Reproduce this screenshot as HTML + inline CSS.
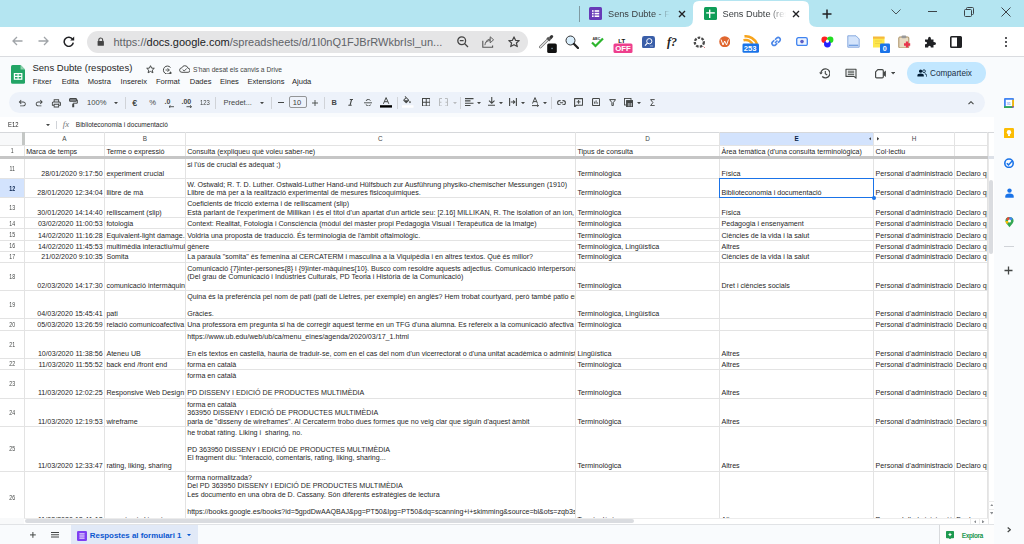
<!DOCTYPE html><html><head><meta charset="utf-8"><style>
*{margin:0;padding:0;box-sizing:border-box}
html,body{width:1024px;height:544px;overflow:hidden}
body{position:relative;font-family:"Liberation Sans", sans-serif;background:#f9fbfd}
.a{position:absolute}
.t{position:absolute;white-space:pre;line-height:1}
</style></head><body>
<div class="a" style="left:0.00px;top:0.00px;width:1024.00px;height:27.00px;background:#b4e5f1;"></div>
<div class="a" style="left:579.00px;top:6.00px;width:1.00px;height:16.00px;background:#7f9aa2;"></div>
<svg class="a" style="left:589.00px;top:7.00px;" width="13" height="13" viewBox="0 0 13 13"><rect x="0" y="0" width="13" height="13" rx="1.5" fill="#673ab7"/><rect x="3" y="3.2" width="1.6" height="1.6" fill="#fff"/><rect x="5.6" y="3.2" width="4.6" height="1.6" fill="#fff"/><rect x="3" y="5.8" width="1.6" height="1.6" fill="#fff"/><rect x="5.6" y="5.8" width="4.6" height="1.6" fill="#fff"/><rect x="3" y="8.4" width="1.6" height="1.6" fill="#fff"/><rect x="5.6" y="8.4" width="4.6" height="1.6" fill="#fff"/></svg>
<div class="a" style="left:608px;top:7px;width:62px;height:14px;overflow:hidden;-webkit-mask-image:linear-gradient(90deg,#000 75%,transparent 100%)"><div class="t" style="left:0;top:3px;font-size:9.2px;color:#3c4043">Sens Dubte - Formulari</div></div>
<svg class="a" style="left:677.50px;top:9.50px;" width="8" height="8" viewBox="0 0 8 8"><path d="M1 1L7 7M7 1L1 7" stroke="#202124" stroke-width="1.4"/></svg>
<svg class="a" style="left:685.00px;top:0.00px;" width="132" height="27" viewBox="0 0 132 27"><path d="M0 27 Q8 27 8 19 L8 7 Q8 1 14 1 L118 1 Q124 1 124 7 L124 19 Q124 27 132 27 Z" fill="#fff"/></svg>
<svg class="a" style="left:703.50px;top:7.00px;" width="13" height="13" viewBox="0 0 13 13"><rect x="0" y="0" width="13" height="13" rx="1.5" fill="#0f9d58"/><rect x="2.2" y="5.2" width="8.6" height="1.4" fill="#fff"/><rect x="5" y="2.6" width="1.4" height="8.4" fill="#fff"/></svg>
<div class="a" style="left:722.5px;top:7px;width:63px;height:14px;overflow:hidden;-webkit-mask-image:linear-gradient(90deg,#000 72%,transparent 100%)"><div class="t" style="left:0;top:3px;font-size:9.2px;color:#3c4043">Sens Dubte (respostes)</div></div>
<svg class="a" style="left:792.00px;top:9.50px;" width="8" height="8" viewBox="0 0 8 8"><path d="M1 1L7 7M7 1L1 7" stroke="#202124" stroke-width="1.4"/></svg>
<svg class="a" style="left:821.50px;top:9.00px;" width="10" height="10" viewBox="0 0 10 10"><path d="M5 0.5V9.5M0.5 5H9.5" stroke="#202124" stroke-width="1.5"/></svg>
<svg class="a" style="left:890.50px;top:8.50px;" width="10" height="6" viewBox="0 0 10 6"><path d="M0.5 0.5L5 5L9.5 0.5" stroke="#4a5559" stroke-width="1" fill="none"/></svg>
<div class="a" style="left:927.50px;top:11.00px;width:9.00px;height:1.00px;background:#3c4448;"></div>
<svg class="a" style="left:963.50px;top:7.00px;" width="10" height="10" viewBox="0 0 10 10"><rect x="0.5" y="2.5" width="7" height="7" rx="1" stroke="#3c4448" fill="none" stroke-width="1"/><path d="M2.5 2.5V1.5Q2.5 0.5 3.5 0.5H8.5Q9.5 0.5 9.5 1.5V6.5Q9.5 7.5 8.5 7.5H7.5" stroke="#3c4448" fill="none" stroke-width="1"/></svg>
<svg class="a" style="left:1000.50px;top:7.00px;" width="10" height="10" viewBox="0 0 10 10"><path d="M0.5 0.5L9.5 9.5M9.5 0.5L0.5 9.5" stroke="#3c4448" stroke-width="1"/></svg>
<div class="a" style="left:0.00px;top:27.00px;width:1024.00px;height:29.00px;background:#fff;"></div>
<div class="a" style="left:0.00px;top:55.50px;width:1024.00px;height:1.00px;background:#dadce0;"></div>
<svg class="a" style="left:12.00px;top:36.00px;" width="11" height="10" viewBox="0 0 11 10"><path d="M10.5 5H1.2M5 1L1 5L5 9" stroke="#a0a4a8" stroke-width="1.3" fill="none"/></svg>
<svg class="a" style="left:37.50px;top:36.00px;" width="11" height="10" viewBox="0 0 11 10"><path d="M0.5 5H9.8M6 1L10 5L6 9" stroke="#a0a4a8" stroke-width="1.3" fill="none"/></svg>
<svg class="a" style="left:63.00px;top:35.50px;" width="12" height="11" viewBox="0 0 12 11"><path d="M9.6 3.2A4.6 4.6 0 1 0 10.3 6.6" stroke="#202124" stroke-width="1.5" fill="none"/><path d="M11.2 0.6V4.6H7.2Z" fill="#202124"/></svg>
<div class="a" style="left:86.50px;top:30.50px;width:441.50px;height:22.30px;background:#e5e5e6;border-radius:11.2px"></div>
<svg class="a" style="left:97.20px;top:37.00px;" width="7.5" height="9" viewBox="0 0 7.5 9"><path d="M1.8 4V2.9A1.95 1.95 0 0 1 5.7 2.9V4" stroke="#444" stroke-width="1.1" fill="none"/><rect x="0.6" y="4" width="6.3" height="4.8" rx="0.6" fill="#444"/></svg>
<div class="t" style="left:113.5px;top:36.9px;font-size:11px;line-height:1;color:#5f6368">https://<span style="color:#202124">docs.google.com</span>/spreadsheets/d/1I0nQ1FJBrRWkbrIsl_un...</div>
<svg class="a" style="left:456.50px;top:35.80px;" width="12" height="12" viewBox="0 0 12 12"><circle cx="4.7" cy="4.7" r="3.9" stroke="#444" stroke-width="1.3" fill="none"/><path d="M2.8 4.7H6.6M7.5 7.5L11 11" stroke="#444" stroke-width="1.3"/></svg>
<svg class="a" style="left:482.00px;top:35.60px;" width="12.5" height="12" viewBox="0 0 12.5 12"><path d="M0.8 4.8V11.2H10.6V9.6" stroke="#555" stroke-width="1.1" fill="none"/><path d="M2.9 9.2Q3 6.8 4.6 5.6Q6 4.6 8.2 4.6M3.6 6.6Q5 3.2 8.2 3" stroke="#555" stroke-width="0.9" fill="none"/><path d="M8.2 0.8L11.6 3.8L8.2 6.8Z" stroke="#555" stroke-width="0.9" fill="none" stroke-linejoin="round"/></svg>
<svg class="a" style="left:507.50px;top:35.80px;" width="12" height="12" viewBox="0 0 12 12"><path d="M6 0.9L7.55 4.3L11.2 4.6L8.4 7L9.3 10.6L6 8.7L2.7 10.6L3.6 7L0.8 4.6L4.45 4.3Z" stroke="#444" stroke-width="1.2" fill="none" stroke-linejoin="round"/></svg>
<svg class="a" style="left:539.00px;top:34.50px;" width="18" height="18" viewBox="0 0 18 18"><path d="M1.4 12L8.6 4.8" stroke="#6a6a6a" stroke-width="2.6" stroke-linecap="round"/><path d="M1.4 12L8.6 4.8" stroke="#ececec" stroke-width="1.2" stroke-linecap="round"/><path d="M7.4 3.6L9.2 1.8L12 4.6L10.2 6.4Z" fill="#555"/><path d="M10 2.2L11.6 0.6Q12.8 -0.4 13.8 0.6Q14.8 1.6 13.6 2.8L12 4.4Z" fill="#333"/><rect x="8.2" y="8.4" width="9.6" height="9.6" rx="1.6" fill="#111"/><rect x="12.4" y="12.8" width="1.3" height="1.3" fill="#8ab"/></svg>
<svg class="a" style="left:564.50px;top:34.80px;" width="14" height="14" viewBox="0 0 14 14"><circle cx="5.5" cy="5.5" r="4.5" stroke="#333" stroke-width="1" fill="#d9eefc"/><path d="M8.8 8.8L13 13" stroke="#222" stroke-width="2.2" stroke-linecap="round"/></svg>
<svg class="a" style="left:590.50px;top:36.00px;" width="13" height="12" viewBox="0 0 13 12"><text x="1.5" y="4" font-size="3.6" font-weight="700" fill="#333" font-family="Liberation Sans">ABC</text><path d="M1 6.5L4.5 10L12 2.5" stroke="#2db52d" stroke-width="2.2" fill="none"/></svg>
<svg class="a" style="left:612.50px;top:36.50px;" width="20" height="16.5" viewBox="0 0 20 16.5"><text x="5.2" y="5.6" font-size="6" font-weight="700" fill="#111" font-family="Liberation Sans">LT</text><rect x="0.5" y="6.5" width="19" height="9.5" rx="1.5" fill="#ee3f8d"/><text x="2.2" y="14.3" font-size="7.8" font-weight="700" fill="#fff" font-family="Liberation Sans">OFF</text></svg>
<svg class="a" style="left:641.50px;top:35.50px;" width="13" height="12.5" viewBox="0 0 13 12.5"><rect x="0" y="0" width="13" height="12.5" rx="2.4" fill="#3a5ea8"/><circle cx="7.3" cy="5.2" r="2.6" stroke="#fff" stroke-width="1" fill="none"/><path d="M5.4 7.2L3 9.6" stroke="#fff" stroke-width="1.2"/><path d="M8 10H11" stroke="#c8d4ee" stroke-width="0.6"/></svg>
<div class="t" style="left:667px;top:36.4px;font-size:12px;font-family:'Liberation Serif',serif;font-style:italic;font-weight:700;color:#222">f?</div>
<svg class="a" style="left:692.50px;top:35.50px;" width="13" height="12.5" viewBox="0 0 13 12.5"><circle cx="6.3" cy="6.2" r="4.5" stroke="#4a4a4a" stroke-width="2.3" fill="none" stroke-dasharray="2.6 1.2"/><path d="M10.5 10.5L12 12" stroke="#c44" stroke-width="0.7"/></svg>
<svg class="a" style="left:718.50px;top:35.80px;" width="11.5" height="11.5" viewBox="0 0 11.5 11.5"><circle cx="5.75" cy="5.75" r="5.5" fill="#e0662e"/><path d="M2 3.5L4 9L5.7 5L7.5 9L9.5 3.5" stroke="#fff" stroke-width="1" fill="none"/></svg>
<svg class="a" style="left:741.50px;top:34.50px;" width="17.5" height="18" viewBox="0 0 17.5 18"><path d="M1.5 5.2A8.5 8.5 0 0 1 10.5 9" stroke="#f7a41d" stroke-width="2.6" fill="none"/><path d="M2.5 1.4A12 12 0 0 1 15 9" stroke="#f7a41d" stroke-width="2.6" fill="none"/><rect x="0.5" y="8.5" width="16.5" height="9.3" rx="1.4" fill="#1a73e8"/><text x="1.8" y="16.3" font-size="7.6" font-weight="700" fill="#fff" font-family="Liberation Sans">253</text></svg>
<svg class="a" style="left:769.00px;top:35.00px;" width="14" height="13" viewBox="0 0 14 13"><path d="M6 8L8.5 5.5" stroke="#4a86e8" stroke-width="1.6"/><path d="M5.3 5.2L3.6 6.9A2.1 2.1 0 0 0 6.6 9.9L8.3 8.2" stroke="#4a86e8" stroke-width="1.6" fill="none"/><path d="M6 4.8L7.7 3.1A2.1 2.1 0 0 1 10.7 6.1L9 7.8" stroke="#4a86e8" stroke-width="1.6" fill="none"/></svg>
<svg class="a" style="left:795.50px;top:36.80px;" width="12" height="9.2" viewBox="0 0 12 9.2"><rect x="0.7" y="0.7" width="10.6" height="7.8" rx="1.6" stroke="#3f83f0" stroke-width="1.3" fill="#eef4fe"/><circle cx="6" cy="4.6" r="1.8" fill="#5b5fc7"/></svg>
<svg class="a" style="left:821.00px;top:35.50px;" width="13" height="12" viewBox="0 0 13 12"><circle cx="3.6" cy="3.8" r="3.2" fill="#f22"/><circle cx="9.2" cy="3.8" r="3.2" fill="#2d2" /><circle cx="6.4" cy="8" r="3.4" fill="#22f"/><circle cx="6.4" cy="5.2" r="1.6" fill="#fff"/></svg>
<svg class="a" style="left:846.50px;top:35.00px;" width="13" height="13" viewBox="0 0 13 13"><path d="M0.8 0.8H9L12.2 4V12.2H0.8Z" fill="#d4e4fb" stroke="#7ea3db" stroke-width="0.9"/><path d="M1.8 10.3H11.2" stroke="#6f9ee0" stroke-width="1.3"/></svg>
<svg class="a" style="left:872.50px;top:35.50px;" width="18" height="17.5" viewBox="0 0 18 17.5"><rect x="0" y="1" width="11.5" height="10.5" fill="#fde74c"/><rect x="0" y="0.5" width="11.5" height="2.2" fill="#f6b93b"/><path d="M2 5H9M2 7.5H8" stroke="#e8c840" stroke-width="0.7"/><rect x="7" y="7.6" width="10" height="9.5" rx="1.3" fill="#1a73e8"/><text x="9.8" y="15.3" font-size="7.2" font-weight="700" fill="#fff" font-family="Liberation Sans">0</text></svg>
<svg class="a" style="left:897.50px;top:34.80px;" width="13.5" height="13.5" viewBox="0 0 13.5 13.5"><rect x="0.8" y="2" width="10" height="11" rx="1" fill="#e9dcc4" stroke="#a98e5f" stroke-width="1"/><rect x="3.5" y="0.5" width="4.8" height="2.8" rx="1" fill="#999"/><path d="M9 6.5V12.5M6 9.5H12.2" stroke="#e8344c" stroke-width="2.3"/></svg>
<svg class="a" style="left:923.50px;top:35.50px;" width="12.5" height="12" viewBox="0 0 12.5 12"><path d="M1 3.5H4Q3.8 0.8 5.5 0.8Q7.2 0.8 7 3.5H9.5V6Q12 5.8 12 7.5Q12 9.2 9.5 9V11.5H6.8Q7 9.8 5.5 9.8Q4 9.8 4.2 11.5H1V8.3Q3 8.5 3 7Q3 5.5 1 5.7Z" fill="#202124"/></svg>
<svg class="a" style="left:949.50px;top:35.50px;" width="12" height="12" viewBox="0 0 12 12"><rect x="0.8" y="0.8" width="10.4" height="10.4" rx="0.8" stroke="#202124" stroke-width="1.6" fill="none"/><rect x="7" y="0.8" width="4.2" height="10.4" fill="#202124"/></svg>
<div class="a" style="left:1005.3px;top:36.90px;width:2px;height:2px;border-radius:1px;background:#202124"></div>
<div class="a" style="left:1005.3px;top:40.70px;width:2px;height:2px;border-radius:1px;background:#202124"></div>
<div class="a" style="left:1005.3px;top:44.50px;width:2px;height:2px;border-radius:1px;background:#202124"></div>
<svg class="a" style="left:11.00px;top:65.20px;" width="14.2" height="18.8" viewBox="0 0 14.2 18.8"><path d="M1.6 0H9.6L14.2 4.6V17.2Q14.2 18.8 12.6 18.8H1.6Q0 18.8 0 17.2V1.6Q0 0 1.6 0Z" fill="#23a566"/><path d="M9.6 0V4.6H14.2Z" fill="#8ed1ad"/><rect x="3.4" y="8.6" width="7.4" height="5.6" fill="none" stroke="#fff" stroke-width="1.2"/><path d="M3.4 11.4H10.8M7.1 8.6V14.2" stroke="#fff" stroke-width="1.1"/></svg>
<div class="t" style="left:32.50px;top:63.00px;font-size:9.5px;color:#1f1f1f;font-weight:400;">Sens Dubte (respostes)</div>
<svg class="a" style="left:145.80px;top:65.00px;" width="9" height="8.5" viewBox="0 0 9 8.5"><path d="M4.5 0.7L5.6 3.1L8.3 3.3L6.3 5.1L6.9 7.8L4.5 6.4L2.1 7.8L2.7 5.1L0.7 3.3L3.4 3.1Z" stroke="#444746" stroke-width="1" fill="none" stroke-linejoin="round"/></svg>
<svg class="a" style="left:161.50px;top:64.50px;" width="11" height="9.5" viewBox="0 0 11 9.5"><path d="M8.5 2.5A4 4 0 1 0 8.8 7.2" stroke="#444746" stroke-width="1" fill="none"/><path d="M3.5 5H7.3M5.5 3.2L7.3 5L5.5 6.8" stroke="#444746" stroke-width="0.9" fill="none"/><path d="M8.5 6.6V9.4M7.1 8H9.9" stroke="#444746" stroke-width="0.9"/></svg>
<svg class="a" style="left:178.50px;top:65.00px;" width="11.5" height="8" viewBox="0 0 11.5 8"><path d="M3 7.3H9Q11 7.3 11 5.2Q11 3.3 9 3.2Q8.4 0.7 5.8 0.7Q3.6 0.7 2.9 2.8Q0.6 3 0.6 5.1Q0.6 7.3 3 7.3Z" stroke="#444746" stroke-width="0.95" fill="none"/><path d="M3.7 4.6L5.2 6L7.8 3.4" stroke="#444746" stroke-width="0.9" fill="none"/></svg>
<div class="t" style="left:193.00px;top:67.00px;font-size:6.66px;color:#444746;font-weight:400;">S&#x27;han desat els canvis a Drive</div>
<div class="t" style="left:32.80px;top:78.00px;font-size:7.55px;color:#1f1f1f;font-weight:400;">Fitxer</div>
<div class="t" style="left:61.70px;top:78.00px;font-size:7.55px;color:#1f1f1f;font-weight:400;">Edita</div>
<div class="t" style="left:87.80px;top:78.00px;font-size:7.55px;color:#1f1f1f;font-weight:400;">Mostra</div>
<div class="t" style="left:120.60px;top:78.00px;font-size:7.55px;color:#1f1f1f;font-weight:400;">Insereix</div>
<div class="t" style="left:156.00px;top:78.00px;font-size:7.55px;color:#1f1f1f;font-weight:400;">Format</div>
<div class="t" style="left:189.70px;top:78.00px;font-size:7.55px;color:#1f1f1f;font-weight:400;">Dades</div>
<div class="t" style="left:220.00px;top:78.00px;font-size:7.55px;color:#1f1f1f;font-weight:400;">Eines</div>
<div class="t" style="left:247.50px;top:78.00px;font-size:7.55px;color:#1f1f1f;font-weight:400;">Extensions</div>
<div class="t" style="left:292.00px;top:78.00px;font-size:7.55px;color:#1f1f1f;font-weight:400;">Ajuda</div>
<svg class="a" style="left:818.80px;top:68.20px;" width="11.5" height="10.5" viewBox="0 0 11.5 10.5"><path d="M1.9 5.3A4.5 4.5 0 1 1 3.2 8.5" stroke="#444746" stroke-width="1.25" fill="none"/><path d="M0 4.4L1.9 6.6L3.8 4.4Z" fill="#444746"/><path d="M6.3 2.9V5.6L8.2 7" stroke="#444746" stroke-width="1.1" fill="none"/></svg>
<svg class="a" style="left:844.50px;top:68.30px;" width="12" height="11" viewBox="0 0 12 11"><path d="M1 1.2H11V10.2L9 8.4H1Z" stroke="#444746" stroke-width="1.1" fill="none" stroke-linejoin="round"/><path d="M2.8 3.2H9.2M2.8 4.8H9.2M2.8 6.4H9.2" stroke="#444746" stroke-width="0.9"/></svg>
<svg class="a" style="left:874.50px;top:69.00px;" width="11.5" height="9.5" viewBox="0 0 11.5 9.5"><path d="M2.8 0.6H7.2Q8.3 0.6 8.3 1.7V7.8Q8.3 8.9 7.2 8.9H1.7Q0.6 8.9 0.6 7.8V2.8Z" stroke="#444746" stroke-width="1.2" fill="none" stroke-linejoin="round"/><path d="M8.3 3.4L10.9 1.6V7.9L8.3 6.1Z" fill="#444746"/></svg>
<svg class="a" style="left:890.80px;top:72.30px;" width="4.2" height="2.4" viewBox="0 0 4.2 2.4"><path d="M0 0H4.2L2.1 2.4Z" fill="#444746"/></svg>
<div class="a" style="left:907.00px;top:62.40px;width:79.00px;height:21.50px;background:#c2e7ff;border-radius:10.8px"></div>
<svg class="a" style="left:916.50px;top:69.30px;" width="10" height="8" viewBox="0 0 10 8"><circle cx="3.6" cy="2.2" r="1.6" fill="#001d35"/><path d="M0.4 7.6V6.4Q0.4 4.6 3.6 4.6Q6.8 4.6 6.8 6.4V7.6Z" fill="#001d35"/><circle cx="7" cy="2.2" r="1.4" fill="none" stroke="#001d35" stroke-width="0.8"/><path d="M7.8 4.7Q9.6 4.9 9.6 6.4V7.6" stroke="#001d35" stroke-width="0.9" fill="none"/></svg>
<div class="t" style="left:930.00px;top:70.00px;font-size:8.2px;color:#1b3047;font-weight:400;">Comparteix</div>
<div class="a" style="left:8.80px;top:92.00px;width:976.60px;height:20.80px;background:#edf2fa;border-radius:10.4px"></div>
<svg class="a" style="left:17.25px;top:98.00px;" width="10.5" height="10.5" viewBox="0 0 10.5 10.5"><g transform="scale(0.01094) translate(0,960)"><path d="M280-200v-80h284q63 0 109.5-40T720-420q0-60-46.5-100T564-560H312l104 104-56 56-200-200 200-200 56 56-104 104h252q97 0 166.5 63T800-420q0 94-69.5 157T564-200H280Z" fill="#444746"/></g></svg>
<svg class="a" style="left:34.05px;top:98.00px;" width="10.5" height="10.5" viewBox="0 0 10.5 10.5"><g transform="scale(0.01094) translate(0,960)"><path d="M396-200q-97 0-166.5-63T160-420q0-94 69.5-157T396-640h252L544-744l56-56 200 200-200 200-56-56 104-104H396q-63 0-109.5 40T240-420q0 60 46.5 100T396-280h284v80H396Z" fill="#444746"/></g></svg>
<svg class="a" style="left:51.30px;top:97.65px;" width="10.8" height="10.8" viewBox="0 0 10.8 10.8"><g transform="scale(0.01125) translate(0,960)"><path d="M640-640v-120H320v120h-80v-200h480v200h-80Zm-480 80h640-640Zm560 100q17 0 28.5-11.5T760-500q0-17-11.5-28.5T720-540q-17 0-28.5 11.5T680-500q0 17 11.5 28.5T720-460Zm-80 260v-160H320v160h320Zm80 80H240v-160H80v-240q0-51 35-85.5t85-34.5h560q51 0 85.5 34.5T880-520v240H720v160Zm80-240v-160q0-17-11.5-28.5T760-560H200q-17 0-28.5 11.5T160-520v160h80v-80h480v80h80Z" fill="#444746"/></g></svg>
<svg class="a" style="left:68.80px;top:98.40px;" width="9" height="9.5" viewBox="0 0 9 9.5"><rect x="0.6" y="0.6" width="6.8" height="2.6" rx="0.7" stroke="#444746" stroke-width="1.1" fill="#8e9196"/><path d="M7.4 1.9H8.3V5.2H4.2V6.2" stroke="#444746" stroke-width="1" fill="none"/><rect x="3.2" y="6" width="2" height="3.2" rx="0.3" fill="#444746"/></svg>
<div class="t" style="left:87.00px;top:99.00px;font-size:7.6px;color:#444746;font-weight:400;">100%</div>
<svg class="a" style="left:113.80px;top:101.80px;" width="4" height="2.2" viewBox="0 0 4 2.2"><path d="M0 0H4L2 2.2Z" fill="#444746"/></svg>
<div class="a" style="left:125.00px;top:96.50px;width:0.60px;height:12.00px;background:#d0d3d8;"></div>
<div class="t" style="left:132.20px;top:100.00px;font-size:8.2px;color:#444746;font-weight:400;text-shadow:0.3px 0 0 #444746">€</div>
<div class="t" style="left:149.30px;top:99.00px;font-size:7.6px;color:#444746;font-weight:400;">%</div>
<div class="t" style="left:164.6px;top:97.6px;font-size:7px;color:#444746;font-weight:700">.0</div>
<svg class="a" style="left:168.00px;top:104.50px;" width="6.5" height="3.5" viewBox="0 0 6.5 3.5"><path d="M6 1.7H1M2.6 0.2L1 1.7L2.6 3.2" stroke="#444746" stroke-width="0.9" fill="none"/></svg>
<div class="t" style="left:181.5px;top:97.6px;font-size:7px;color:#444746;font-weight:700">.00</div>
<svg class="a" style="left:185.50px;top:104.50px;" width="6.5" height="3.5" viewBox="0 0 6.5 3.5"><path d="M0.5 1.7H5.5M3.9 0.2L5.5 1.7L3.9 3.2" stroke="#444746" stroke-width="0.9" fill="none"/></svg>
<div class="t" style="left:199.60px;top:100.00px;font-size:6.6px;color:#444746;font-weight:400;transform:scaleX(0.9);transform-origin:left">123</div>
<div class="a" style="left:215.20px;top:96.50px;width:0.60px;height:12.00px;background:#d0d3d8;"></div>
<div class="t" style="left:223.60px;top:99.00px;font-size:7.5px;color:#444746;font-weight:400;">Predet...</div>
<svg class="a" style="left:259.70px;top:101.80px;" width="4" height="2.2" viewBox="0 0 4 2.2"><path d="M0 0H4L2 2.2Z" fill="#444746"/></svg>
<div class="a" style="left:271.40px;top:96.50px;width:0.60px;height:12.00px;background:#d0d3d8;"></div>
<div class="a" style="left:277.50px;top:102.10px;width:6.00px;height:1.00px;background:#444746;"></div>
<div class="a" style="left:288.60px;top:95.90px;width:18.20px;height:12.60px;background:transparent;border:1px solid #939597;border-radius:2px"></div>
<div class="t" style="left:292.80px;top:99.00px;font-size:7.5px;color:#3c3c3c;font-weight:400;">10</div>
<svg class="a" style="left:311.80px;top:99.60px;" width="6" height="6" viewBox="0 0 6 6"><path d="M3 0V6M0 3H6" stroke="#444746" stroke-width="0.9"/></svg>
<div class="a" style="left:323.60px;top:96.50px;width:0.60px;height:12.00px;background:#d0d3d8;"></div>
<div class="t" style="left:331.40px;top:99.00px;font-size:7.4px;color:#444746;font-weight:700;">B</div>
<svg class="a" style="left:347.80px;top:99.00px;" width="5.5" height="6.8" viewBox="0 0 5.5 6.8"><path d="M1.8 0.5H5.2M0.3 6.3H3.7M3.6 0.5L2 6.3" stroke="#444746" stroke-width="1.1" fill="none"/></svg>
<svg class="a" style="left:363.60px;top:98.60px;" width="8.6" height="7.6" viewBox="0 0 8.6 7.6"><path d="M0 3.8H8.6" stroke="#444746" stroke-width="0.9"/><path d="M6.4 1.6Q6 0.5 4.3 0.5Q2.2 0.5 2.2 1.9M2.2 5.4Q2.4 7.1 4.3 7.1Q6.4 7.1 6.4 5.6" stroke="#444746" stroke-width="1" fill="none"/></svg>
<svg class="a" style="left:379.80px;top:97.00px;" width="12.2" height="11" viewBox="0 0 12.2 11"><path d="M3.4 6.8L6.1 0.6L8.8 6.8M4.5 4.7H7.7" stroke="#444746" stroke-width="1" fill="none"/><rect x="0" y="8.2" width="12.2" height="2.4" fill="#000"/></svg>
<div class="a" style="left:396.60px;top:96.50px;width:0.60px;height:12.00px;background:#d0d3d8;"></div>
<svg class="a" style="left:402.00px;top:96.30px;" width="11.5" height="12" viewBox="0 0 11.5 12"><g transform="scale(0.42)"><path d="M16.56 8.94L7.62 0 6.21 1.41l2.38 2.38-5.15 5.15c-.59.59-.59 1.54 0 2.12l5.5 5.5c.29.29.68.44 1.06.44s.77-.15 1.06-.44l5.5-5.5c.59-.58.59-1.53 0-2.12zM5.21 10L10 5.21 14.79 10H5.21zM19 11.5s-2 2.17-2 3.5c0 1.1.9 2 2 2s2-.9 2-2c0-1.33-2-3.5-2-3.5z" fill="#444746"/></g><rect x="0" y="9.3" width="11.5" height="2.4" fill="#fff"/></svg>
<svg class="a" style="left:421.50px;top:97.80px;" width="8.5" height="8.5" viewBox="0 0 8.5 8.5"><rect x="0.5" y="0.5" width="7.5" height="7.5" stroke="#444746" stroke-width="1" fill="none"/><path d="M4.25 0.5V8M0.5 4.25H8" stroke="#444746" stroke-width="1"/></svg>
<svg class="a" style="left:438.50px;top:97.80px;" width="9" height="8.5" viewBox="0 0 9 8.5"><path d="M3 0.5H0.5V8H3M6 0.5H8.5V8H6M0.5 4.25H2.5M6.5 4.25H8.5" stroke="#b9bcbf" stroke-width="1" fill="none"/></svg>
<svg class="a" style="left:452.80px;top:101.80px;" width="4" height="2.2" viewBox="0 0 4 2.2"><path d="M0 0H4L2 2.2Z" fill="#b9bcbf"/></svg>
<div class="a" style="left:459.60px;top:96.50px;width:0.60px;height:12.00px;background:#d0d3d8;"></div>
<svg class="a" style="left:465.00px;top:97.70px;" width="8.5" height="8.5" viewBox="0 0 8.5 8.5"><path d="M0 0.6H8.5M0 2.9H5.5M0 5.2H8.5M0 7.5H5.5" stroke="#444746" stroke-width="1.1"/></svg>
<svg class="a" style="left:476.80px;top:101.80px;" width="4" height="2.2" viewBox="0 0 4 2.2"><path d="M0 0H4L2 2.2Z" fill="#444746"/></svg>
<svg class="a" style="left:487.80px;top:97.30px;" width="7.5" height="9" viewBox="0 0 7.5 9"><path d="M3.75 0V6M1 3.6L3.75 6.2L6.5 3.6M0 8.3H7.5" stroke="#444746" stroke-width="1.1" fill="none"/></svg>
<svg class="a" style="left:498.80px;top:101.80px;" width="4" height="2.2" viewBox="0 0 4 2.2"><path d="M0 0H4L2 2.2Z" fill="#444746"/></svg>
<svg class="a" style="left:509.00px;top:98.00px;" width="8" height="8" viewBox="0 0 8 8"><path d="M0.6 0V8M7.4 0V8M1.8 4H5.8M4.2 2.4L5.8 4L4.2 5.6" stroke="#444746" stroke-width="1.1" fill="none"/></svg>
<svg class="a" style="left:520.60px;top:101.80px;" width="4" height="2.2" viewBox="0 0 4 2.2"><path d="M0 0H4L2 2.2Z" fill="#444746"/></svg>
<svg class="a" style="left:531.50px;top:97.00px;" width="7.5" height="9.5" viewBox="0 0 7.5 9.5"><path d="M0.5 6.5L3 0.6L5.5 6.5M1.4 4.6H4.6M0 8.6H6.5M5.2 7.3L6.6 8.6L5.2 9.9" stroke="#444746" stroke-width="1" fill="none"/></svg>
<svg class="a" style="left:542.60px;top:101.80px;" width="4" height="2.2" viewBox="0 0 4 2.2"><path d="M0 0H4L2 2.2Z" fill="#444746"/></svg>
<div class="a" style="left:551.30px;top:96.50px;width:0.60px;height:12.00px;background:#d0d3d8;"></div>
<svg class="a" style="left:557.00px;top:99.80px;" width="9" height="5.5" viewBox="0 0 9 5.5"><path d="M3.6 0.6H2.7Q0.6 0.6 0.6 2.75Q0.6 4.9 2.7 4.9H3.6M5.4 0.6H6.3Q8.4 0.6 8.4 2.75Q8.4 4.9 6.3 4.9H5.4M2.9 2.75H6.1" stroke="#444746" stroke-width="1.1" fill="none"/></svg>
<svg class="a" style="left:573.80px;top:97.60px;" width="9.2" height="9.5" viewBox="0 0 9.2 9.5"><path d="M0.6 0.6H8.6V7.2H2.4L0.6 9Z" stroke="#444746" stroke-width="1.1" fill="none" stroke-linejoin="round"/><path d="M4.6 2V5.8M2.7 3.9H6.5" stroke="#444746" stroke-width="1"/></svg>
<svg class="a" style="left:591.80px;top:98.00px;" width="8.2" height="8.2" viewBox="0 0 8.2 8.2"><rect x="0.55" y="0.55" width="7.1" height="7.1" rx="0.8" stroke="#444746" stroke-width="1.1" fill="none"/><path d="M2.6 5.7V3.6M4.1 5.7V2.4M5.6 5.7V4.4" stroke="#444746" stroke-width="0.9"/></svg>
<svg class="a" style="left:609.30px;top:98.80px;" width="7.2" height="7.2" viewBox="0 0 7.2 7.2"><path d="M0.6 0.6H6.6L4.3 3.6V6.6H2.9V3.6Z" stroke="#444746" stroke-width="1" fill="none" stroke-linejoin="round"/></svg>
<svg class="a" style="left:623.80px;top:97.50px;" width="9.5" height="9.5" viewBox="0 0 9.5 9.5"><rect x="0.5" y="0.5" width="6.5" height="6.5" stroke="#444746" stroke-width="0.9" fill="none"/><rect x="2.6" y="2.6" width="6.5" height="6.5" stroke="#444746" stroke-width="1" fill="#444746"/><path d="M4.3 5V8.3M5.9 5V8.3M7.5 5V8.3" stroke="#edf2fa" stroke-width="0.6"/></svg>
<svg class="a" style="left:636.80px;top:101.80px;" width="4" height="2.2" viewBox="0 0 4 2.2"><path d="M0 0H4L2 2.2Z" fill="#444746"/></svg>
<svg class="a" style="left:650.00px;top:98.60px;" width="5" height="7.5" viewBox="0 0 5 7.5"><path d="M4.7 0.6H0.6L2.9 3.6L0.6 6.6H4.7" stroke="#444746" stroke-width="0.95" fill="none"/></svg>
<svg class="a" style="left:967.60px;top:101.20px;" width="6" height="3.6" viewBox="0 0 6 3.6"><path d="M0.5 3.2L3 0.7L5.5 3.2" stroke="#444746" stroke-width="1.1" fill="none"/></svg>
<div class="a" style="left:0.00px;top:117.00px;width:994.20px;height:15.30px;background:#fff;"></div>
<div class="t" style="left:7.60px;top:122.00px;font-size:6.9px;color:#1f1f1f;font-weight:400;transform:scaleX(0.85);transform-origin:left">E12</div>
<svg class="a" style="left:45.90px;top:123.80px;" width="4" height="2.2" viewBox="0 0 4 2.2"><path d="M0 0H4L2 2.2Z" fill="#444746"/></svg>
<div class="a" style="left:56.40px;top:120.50px;width:0.60px;height:8.80px;background:#d0d3d8;"></div>
<div class="t" style="left:62.8px;top:119.6px;font-size:8.6px;font-family:'Liberation Serif',serif;font-style:italic;color:#6f7378">fx</div>
<div class="t" style="left:75.80px;top:122.00px;font-size:6.56px;color:#1f1f1f;font-weight:400;">Biblioteconomia i documentació</div>
<svg class="a" style="left:1003.80px;top:98.20px;" width="10" height="10" viewBox="0 0 10 10"><rect x="0" y="0" width="10" height="10" rx="1" fill="#4285f4"/><rect x="1.8" y="1.8" width="6.4" height="6.4" fill="#fff"/><rect x="8.2" y="1.8" width="1.8" height="6.4" fill="#fbbc04"/><rect x="0" y="8.2" width="8.2" height="1.8" fill="#34a853"/><path d="M8.2 8.2H10L8.2 10Z" fill="#ea4335"/><text x="2.4" y="7" font-size="4" fill="#4285f4" font-family="Liberation Sans">31</text></svg>
<svg class="a" style="left:1004.00px;top:128.10px;" width="10" height="10.4" viewBox="0 0 10 10.4"><rect x="0" y="0" width="10" height="10.4" rx="1.2" fill="#fbbc04"/><circle cx="5" cy="4.3" r="2.2" fill="#fff"/><rect x="4" y="6.2" width="2" height="1.8" fill="#fff"/></svg>
<svg class="a" style="left:1004.00px;top:157.80px;" width="10" height="10.4" viewBox="0 0 10 10.4"><circle cx="5" cy="5.2" r="4.2" stroke="#1a73e8" stroke-width="1.6" fill="none"/><path d="M2.8 5.2L4.5 6.9L8.6 2.6" stroke="#1a73e8" stroke-width="1.5" fill="none"/><circle cx="5" cy="5.2" r="2.4" fill="#fff" opacity="0"/></svg>
<svg class="a" style="left:1004.50px;top:187.80px;" width="9" height="10" viewBox="0 0 9 10"><circle cx="4.5" cy="2.6" r="2.2" fill="#1a73e8"/><path d="M0.3 9.8V8.2Q0.3 5.6 4.5 5.6Q8.7 5.6 8.7 8.2V9.8Z" fill="#1a73e8"/></svg>
<svg class="a" style="left:1004.50px;top:217.30px;" width="9" height="10.5" viewBox="0 0 9 10.5"><path d="M4.5 10.2Q0.4 5.8 0.4 4.1A4.1 4.1 0 0 1 8.6 4.1Q8.6 5.8 4.5 10.2Z" fill="#34a853"/><path d="M1 2.2A4.1 4.1 0 0 1 4.5 0L4.5 4.1Z" fill="#ea4335"/><path d="M4.5 0A4.1 4.1 0 0 1 8 2L4.5 4.1Z" fill="#4285f4"/><path d="M0.4 4.1Q0.4 5.4 2 7.2L4.5 4.1Z" fill="#fbbc04"/><circle cx="4.5" cy="4.1" r="1.5" fill="#fff"/></svg>
<div class="a" style="left:1003.50px;top:246.00px;width:10.50px;height:0.70px;background:#d0d3d8;"></div>
<svg class="a" style="left:1004.00px;top:266.00px;" width="9" height="9" viewBox="0 0 9 9"><path d="M4.5 0.5V8.5M0.5 4.5H8.5" stroke="#444746" stroke-width="1.3"/></svg>
<div class="a" style="left:0;top:132.3px;width:988px;height:386.00px;background:#fff;overflow:hidden" id="grid">
<div class="a" style="left:0.00px;top:0.00px;width:22.20px;height:12.90px;background:#f8f9fa;"></div>
<div class="a" style="left:719.60px;top:0.00px;width:154.10px;height:12.90px;background:#d3e3fd;"></div>
<div class="a" style="left:0.00px;top:0.00px;width:988.00px;height:0.90px;background:#d6d8db;"></div>
<div class="a" style="left:0.00px;top:12.50px;width:988.00px;height:0.80px;background:#e3e3e3;"></div>
<div class="a" style="left:22.20px;top:0.00px;width:2.40px;height:12.90px;background:#c4c7c5;"></div>
<div class="a" style="left:0.00px;top:46.10px;width:24.30px;height:19.50px;background:#d3e3fd;"></div>
<div class="a" style="left:0.00px;top:23.30px;width:988.00px;height:0.90px;background:#e3e3e3;"></div>
<div class="a" style="left:0.00px;top:45.70px;width:988.00px;height:0.90px;background:#e3e3e3;"></div>
<div class="a" style="left:0.00px;top:65.20px;width:988.00px;height:0.90px;background:#e3e3e3;"></div>
<div class="a" style="left:0.00px;top:84.80px;width:988.00px;height:0.90px;background:#e3e3e3;"></div>
<div class="a" style="left:0.00px;top:96.10px;width:988.00px;height:0.90px;background:#e3e3e3;"></div>
<div class="a" style="left:0.00px;top:107.60px;width:988.00px;height:0.90px;background:#e3e3e3;"></div>
<div class="a" style="left:0.00px;top:118.60px;width:988.00px;height:0.90px;background:#e3e3e3;"></div>
<div class="a" style="left:0.00px;top:129.40px;width:988.00px;height:0.90px;background:#e3e3e3;"></div>
<div class="a" style="left:0.00px;top:157.70px;width:988.00px;height:0.90px;background:#e3e3e3;"></div>
<div class="a" style="left:0.00px;top:186.05px;width:988.00px;height:0.90px;background:#e3e3e3;"></div>
<div class="a" style="left:0.00px;top:197.30px;width:988.00px;height:0.90px;background:#e3e3e3;"></div>
<div class="a" style="left:0.00px;top:225.50px;width:988.00px;height:0.90px;background:#e3e3e3;"></div>
<div class="a" style="left:0.00px;top:236.60px;width:988.00px;height:0.90px;background:#e3e3e3;"></div>
<div class="a" style="left:0.00px;top:265.30px;width:988.00px;height:0.90px;background:#e3e3e3;"></div>
<div class="a" style="left:0.00px;top:293.60px;width:988.00px;height:0.90px;background:#e3e3e3;"></div>
<div class="a" style="left:0.00px;top:338.40px;width:988.00px;height:0.90px;background:#e3e3e3;"></div>
<div class="a" style="left:0.00px;top:392.00px;width:988.00px;height:0.90px;background:#e3e3e3;"></div>
<div class="a" style="left:23.85px;top:12.90px;width:0.90px;height:373.10px;background:#e3e3e3;"></div>
<div class="a" style="left:104.05px;top:0.00px;width:0.90px;height:386.00px;background:#e3e3e3;"></div>
<div class="a" style="left:184.85px;top:0.00px;width:0.90px;height:386.00px;background:#e3e3e3;"></div>
<div class="a" style="left:575.05px;top:0.00px;width:0.90px;height:386.00px;background:#e3e3e3;"></div>
<div class="a" style="left:719.15px;top:0.00px;width:0.90px;height:386.00px;background:#e3e3e3;"></div>
<div class="a" style="left:873.25px;top:0.00px;width:0.90px;height:386.00px;background:#e3e3e3;"></div>
<div class="a" style="left:953.95px;top:0.00px;width:0.90px;height:386.00px;background:#e3e3e3;"></div>
<div class="a" style="left:987.35px;top:0.00px;width:0.90px;height:386.00px;background:#e3e3e3;"></div>
<div class="a" style="left:0.00px;top:23.70px;width:988.00px;height:2.90px;background:#c6c6c6;"></div>
<div class="t" style="left:54.40px;top:3.70px;width:20px;text-align:center;font-size:6.4px;color:#444746;font-weight:400">A</div>
<div class="t" style="left:134.90px;top:3.70px;width:20px;text-align:center;font-size:6.4px;color:#444746;font-weight:400">B</div>
<div class="t" style="left:370.40px;top:3.70px;width:20px;text-align:center;font-size:6.4px;color:#444746;font-weight:400">C</div>
<div class="t" style="left:637.55px;top:3.70px;width:20px;text-align:center;font-size:6.4px;color:#444746;font-weight:400">D</div>
<div class="t" style="left:786.65px;top:3.70px;width:20px;text-align:center;font-size:6.4px;color:#041e49;font-weight:700">E</div>
<div class="t" style="left:904.05px;top:3.70px;width:20px;text-align:center;font-size:6.4px;color:#444746;font-weight:400">H</div>
<svg class="a" style="left:868.6px;top:4.90px" width="2.4" height="3.6" viewBox="0 0 2.4 3.6"><path d="M2.4 0V3.6L0 1.8Z" fill="#444"/></svg>
<svg class="a" style="left:876.6px;top:4.90px" width="2.4" height="3.6" viewBox="0 0 2.4 3.6"><path d="M0 0V3.6L2.4 1.8Z" fill="#444"/></svg>
<div class="t" style="left:0px;top:15.87px;width:24.3px;text-align:center;font-size:6.3px;color:#444746;font-weight:400;transform:scaleX(0.83)">1</div>
<div class="t" style="left:0px;top:33.97px;width:24.3px;text-align:center;font-size:6.3px;color:#444746;font-weight:400;transform:scaleX(0.83)">11</div>
<div class="t" style="left:0px;top:53.42px;width:24.3px;text-align:center;font-size:6.3px;color:#041e49;font-weight:700;transform:scaleX(0.83)">12</div>
<div class="t" style="left:0px;top:72.97px;width:24.3px;text-align:center;font-size:6.3px;color:#444746;font-weight:400;transform:scaleX(0.83)">13</div>
<div class="t" style="left:0px;top:88.42px;width:24.3px;text-align:center;font-size:6.3px;color:#444746;font-weight:400;transform:scaleX(0.83)">14</div>
<div class="t" style="left:0px;top:99.82px;width:24.3px;text-align:center;font-size:6.3px;color:#444746;font-weight:400;transform:scaleX(0.83)">15</div>
<div class="t" style="left:0px;top:111.07px;width:24.3px;text-align:center;font-size:6.3px;color:#444746;font-weight:400;transform:scaleX(0.83)">16</div>
<div class="t" style="left:0px;top:121.97px;width:24.3px;text-align:center;font-size:6.3px;color:#444746;font-weight:400;transform:scaleX(0.83)">17</div>
<div class="t" style="left:0px;top:141.52px;width:24.3px;text-align:center;font-size:6.3px;color:#444746;font-weight:400;transform:scaleX(0.83)">18</div>
<div class="t" style="left:0px;top:169.84px;width:24.3px;text-align:center;font-size:6.3px;color:#444746;font-weight:400;transform:scaleX(0.83)">19</div>
<div class="t" style="left:0px;top:189.64px;width:24.3px;text-align:center;font-size:6.3px;color:#444746;font-weight:400;transform:scaleX(0.83)">20</div>
<div class="t" style="left:0px;top:209.37px;width:24.3px;text-align:center;font-size:6.3px;color:#444746;font-weight:400;transform:scaleX(0.83)">21</div>
<div class="t" style="left:0px;top:229.02px;width:24.3px;text-align:center;font-size:6.3px;color:#444746;font-weight:400;transform:scaleX(0.83)">22</div>
<div class="t" style="left:0px;top:248.92px;width:24.3px;text-align:center;font-size:6.3px;color:#444746;font-weight:400;transform:scaleX(0.83)">23</div>
<div class="t" style="left:0px;top:277.42px;width:24.3px;text-align:center;font-size:6.3px;color:#444746;font-weight:400;transform:scaleX(0.83)">24</div>
<div class="t" style="left:0px;top:313.97px;width:24.3px;text-align:center;font-size:6.3px;color:#444746;font-weight:400;transform:scaleX(0.83)">25</div>
<div class="t" style="left:0px;top:363.17px;width:24.3px;text-align:center;font-size:6.3px;color:#444746;font-weight:400;transform:scaleX(0.83)">26</div>
<div class="a" style="left:24.80px;top:12.70px;width:79.20px;height:11.10px;overflow:hidden">
<div class="t" style="left:1.4px;top:4.00px;font-size:7.115px;color:#1f1f1f">Marca de temps</div>
</div>
<div class="a" style="left:105.00px;top:12.70px;width:79.80px;height:11.10px;overflow:hidden">
<div class="t" style="left:1.4px;top:4.00px;font-size:7.115px;color:#1f1f1f">Terme o expressió</div>
</div>
<div class="a" style="left:185.80px;top:12.70px;width:389.20px;height:11.10px;overflow:hidden">
<div class="t" style="left:1.4px;top:4.00px;font-size:7.115px;color:#1f1f1f">Consulta (expliqueu què voleu saber-ne)</div>
</div>
<div class="a" style="left:576.00px;top:12.70px;width:143.10px;height:11.10px;overflow:hidden">
<div class="t" style="left:1.4px;top:4.00px;font-size:7.115px;color:#1f1f1f">Tipus de consulta</div>
</div>
<div class="a" style="left:720.10px;top:12.70px;width:153.10px;height:11.10px;overflow:hidden">
<div class="t" style="left:1.4px;top:4.00px;font-size:7.115px;color:#1f1f1f">Àrea temàtica (d&#x27;una consulta terminològica)</div>
</div>
<div class="a" style="left:874.20px;top:12.70px;width:79.70px;height:11.10px;overflow:hidden">
<div class="t" style="left:1.4px;top:4.00px;font-size:7.115px;color:#1f1f1f">Col·lectiu</div>
</div>
<div class="a" style="left:24.80px;top:34.70px;width:79.20px;height:10.90px;overflow:hidden">
<div class="t" style="right:1.4px;top:4.00px;font-size:7.115px;color:#1f1f1f">28/01/2020 9:17:50</div>
</div>
<div class="a" style="left:105.00px;top:34.70px;width:79.80px;height:10.90px;overflow:hidden">
<div class="t" style="left:1.4px;top:4.00px;font-size:7.115px;color:#1f1f1f">experiment crucial</div>
</div>
<div class="a" style="left:185.80px;top:26.70px;width:389.20px;height:18.90px;overflow:hidden">
<div class="t" style="left:1.4px;top:3.00px;font-size:7.115px;color:#1f1f1f">si l&#x27;ús de crucial és adequat ;)</div>
</div>
<div class="a" style="left:576.00px;top:34.70px;width:143.10px;height:10.90px;overflow:hidden">
<div class="t" style="left:1.4px;top:4.00px;font-size:7.115px;color:#1f1f1f">Terminològica</div>
</div>
<div class="a" style="left:720.10px;top:34.70px;width:153.10px;height:10.90px;overflow:hidden">
<div class="t" style="left:1.4px;top:4.00px;font-size:7.115px;color:#1f1f1f">Física</div>
</div>
<div class="a" style="left:874.20px;top:34.70px;width:79.70px;height:10.90px;overflow:hidden">
<div class="t" style="left:1.4px;top:4.00px;font-size:7.115px;color:#1f1f1f">Personal d&#x27;administració</div>
</div>
<div class="a" style="left:954.90px;top:34.70px;width:32.40px;height:10.90px;overflow:hidden">
<div class="t" style="left:1.4px;top:4.00px;font-size:7.115px;color:#1f1f1f">Declaro que he llegit</div>
</div>
<div class="a" style="left:24.80px;top:54.70px;width:79.20px;height:10.40px;overflow:hidden">
<div class="t" style="right:1.4px;top:3.00px;font-size:7.115px;color:#1f1f1f">28/01/2020 12:34:04</div>
</div>
<div class="a" style="left:105.00px;top:54.70px;width:79.80px;height:10.40px;overflow:hidden">
<div class="t" style="left:1.4px;top:3.00px;font-size:7.115px;color:#1f1f1f">llibre de mà</div>
</div>
<div class="a" style="left:185.80px;top:45.70px;width:389.20px;height:19.40px;overflow:hidden">
<div class="t" style="left:1.4px;top:4.00px;font-size:7.115px;color:#1f1f1f">W. Ostwald; R. T. D. Luther. Ostwald-Luther Hand-und Hülfsbuch zur Ausführung physiko-chemischer Messungen (1910)</div>
<div class="t" style="left:1.4px;top:12.00px;font-size:7.115px;color:#1f1f1f">Llibre de mà per a la realització experimental de mesures fisicoquímiques.</div>
</div>
<div class="a" style="left:576.00px;top:54.70px;width:143.10px;height:10.40px;overflow:hidden">
<div class="t" style="left:1.4px;top:3.00px;font-size:7.115px;color:#1f1f1f">Terminològica</div>
</div>
<div class="a" style="left:720.10px;top:54.70px;width:153.10px;height:10.40px;overflow:hidden">
<div class="t" style="left:1.4px;top:3.00px;font-size:7.115px;color:#1f1f1f">Biblioteconomia i documentació</div>
</div>
<div class="a" style="left:874.20px;top:54.70px;width:79.70px;height:10.40px;overflow:hidden">
<div class="t" style="left:1.4px;top:3.00px;font-size:7.115px;color:#1f1f1f">Personal d&#x27;administració</div>
</div>
<div class="a" style="left:954.90px;top:54.70px;width:32.40px;height:10.40px;overflow:hidden">
<div class="t" style="left:1.4px;top:3.00px;font-size:7.115px;color:#1f1f1f">Declaro que he llegit</div>
</div>
<div class="a" style="left:24.80px;top:73.70px;width:79.20px;height:11.00px;overflow:hidden">
<div class="t" style="right:1.4px;top:4.00px;font-size:7.115px;color:#1f1f1f">30/01/2020 14:14:40</div>
</div>
<div class="a" style="left:105.00px;top:73.70px;width:79.80px;height:11.00px;overflow:hidden">
<div class="t" style="left:1.4px;top:4.00px;font-size:7.115px;color:#1f1f1f">relliscament (slip)</div>
</div>
<div class="a" style="left:185.80px;top:65.70px;width:389.20px;height:19.00px;overflow:hidden">
<div class="t" style="left:1.4px;top:3.00px;font-size:7.115px;color:#1f1f1f">Coeficients de fricció externa i de relliscament (slip)</div>
<div class="t" style="left:1.4px;top:12.00px;font-size:7.115px;color:#1f1f1f">Està parlant de l&#x27;experiment de Millikan i és el títol d&#x27;un apartat d&#x27;un article seu: [2.16] MILLIKAN, R. The isolation of an ion, a precision</div>
</div>
<div class="a" style="left:576.00px;top:73.70px;width:143.10px;height:11.00px;overflow:hidden">
<div class="t" style="left:1.4px;top:4.00px;font-size:7.115px;color:#1f1f1f">Terminològica</div>
</div>
<div class="a" style="left:720.10px;top:73.70px;width:153.10px;height:11.00px;overflow:hidden">
<div class="t" style="left:1.4px;top:4.00px;font-size:7.115px;color:#1f1f1f">Física</div>
</div>
<div class="a" style="left:874.20px;top:73.70px;width:79.70px;height:11.00px;overflow:hidden">
<div class="t" style="left:1.4px;top:4.00px;font-size:7.115px;color:#1f1f1f">Personal d&#x27;administració</div>
</div>
<div class="a" style="left:954.90px;top:73.70px;width:32.40px;height:11.00px;overflow:hidden">
<div class="t" style="left:1.4px;top:4.00px;font-size:7.115px;color:#1f1f1f">Declaro que he llegit</div>
</div>
<div class="a" style="left:24.80px;top:85.70px;width:79.20px;height:10.30px;overflow:hidden">
<div class="t" style="right:1.4px;top:3.00px;font-size:7.115px;color:#1f1f1f">03/02/2020 11:00:53</div>
</div>
<div class="a" style="left:105.00px;top:85.70px;width:79.80px;height:10.30px;overflow:hidden">
<div class="t" style="left:1.4px;top:3.00px;font-size:7.115px;color:#1f1f1f">fotologia</div>
</div>
<div class="a" style="left:185.80px;top:85.70px;width:389.20px;height:10.30px;overflow:hidden">
<div class="t" style="left:1.4px;top:3.00px;font-size:7.115px;color:#1f1f1f">Context: Realitat, Fotologia i Consciència (mòdul del màster propi Pedagogia Visual i Terapèutica de la Imatge)</div>
</div>
<div class="a" style="left:576.00px;top:85.70px;width:143.10px;height:10.30px;overflow:hidden">
<div class="t" style="left:1.4px;top:3.00px;font-size:7.115px;color:#1f1f1f">Terminològica</div>
</div>
<div class="a" style="left:720.10px;top:85.70px;width:153.10px;height:10.30px;overflow:hidden">
<div class="t" style="left:1.4px;top:3.00px;font-size:7.115px;color:#1f1f1f">Pedagogia i ensenyament</div>
</div>
<div class="a" style="left:874.20px;top:85.70px;width:79.70px;height:10.30px;overflow:hidden">
<div class="t" style="left:1.4px;top:3.00px;font-size:7.115px;color:#1f1f1f">Personal d&#x27;administració</div>
</div>
<div class="a" style="left:954.90px;top:85.70px;width:32.40px;height:10.30px;overflow:hidden">
<div class="t" style="left:1.4px;top:3.00px;font-size:7.115px;color:#1f1f1f">Declaro que he llegit</div>
</div>
<div class="a" style="left:24.80px;top:96.70px;width:79.20px;height:10.80px;overflow:hidden">
<div class="t" style="right:1.4px;top:4.00px;font-size:7.115px;color:#1f1f1f">14/02/2020 11:16:28</div>
</div>
<div class="a" style="left:105.00px;top:96.70px;width:79.80px;height:10.80px;overflow:hidden">
<div class="t" style="left:1.4px;top:4.00px;font-size:7.115px;color:#1f1f1f">Equivalent-light damage.</div>
</div>
<div class="a" style="left:185.80px;top:96.70px;width:389.20px;height:10.80px;overflow:hidden">
<div class="t" style="left:1.4px;top:4.00px;font-size:7.115px;color:#1f1f1f">Voldria una proposta de traducció. És terminologia de l&#x27;àmbit oftalmològic.</div>
</div>
<div class="a" style="left:576.00px;top:96.70px;width:143.10px;height:10.80px;overflow:hidden">
<div class="t" style="left:1.4px;top:4.00px;font-size:7.115px;color:#1f1f1f">Terminològica</div>
</div>
<div class="a" style="left:720.10px;top:96.70px;width:153.10px;height:10.80px;overflow:hidden">
<div class="t" style="left:1.4px;top:4.00px;font-size:7.115px;color:#1f1f1f">Ciències de la vida i la salut</div>
</div>
<div class="a" style="left:874.20px;top:96.70px;width:79.70px;height:10.80px;overflow:hidden">
<div class="t" style="left:1.4px;top:4.00px;font-size:7.115px;color:#1f1f1f">Personal d&#x27;administració</div>
</div>
<div class="a" style="left:954.90px;top:96.70px;width:32.40px;height:10.80px;overflow:hidden">
<div class="t" style="left:1.4px;top:4.00px;font-size:7.115px;color:#1f1f1f">Declaro que he llegit</div>
</div>
<div class="a" style="left:24.80px;top:107.70px;width:79.20px;height:10.80px;overflow:hidden">
<div class="t" style="right:1.4px;top:4.00px;font-size:7.115px;color:#1f1f1f">14/02/2020 11:45:53</div>
</div>
<div class="a" style="left:105.00px;top:107.70px;width:79.80px;height:10.80px;overflow:hidden">
<div class="t" style="left:1.4px;top:4.00px;font-size:7.115px;color:#1f1f1f">multimèdia interactiu/multimèdia</div>
</div>
<div class="a" style="left:185.80px;top:107.70px;width:389.20px;height:10.80px;overflow:hidden">
<div class="t" style="left:1.4px;top:4.00px;font-size:7.115px;color:#1f1f1f">gènere</div>
</div>
<div class="a" style="left:576.00px;top:107.70px;width:143.10px;height:10.80px;overflow:hidden">
<div class="t" style="left:1.4px;top:4.00px;font-size:7.115px;color:#1f1f1f">Terminològica, Lingüística</div>
</div>
<div class="a" style="left:720.10px;top:107.70px;width:153.10px;height:10.80px;overflow:hidden">
<div class="t" style="left:1.4px;top:4.00px;font-size:7.115px;color:#1f1f1f">Altres</div>
</div>
<div class="a" style="left:874.20px;top:107.70px;width:79.70px;height:10.80px;overflow:hidden">
<div class="t" style="left:1.4px;top:4.00px;font-size:7.115px;color:#1f1f1f">Personal d&#x27;administració</div>
</div>
<div class="a" style="left:954.90px;top:107.70px;width:32.40px;height:10.80px;overflow:hidden">
<div class="t" style="left:1.4px;top:4.00px;font-size:7.115px;color:#1f1f1f">Declaro que he llegit</div>
</div>
<div class="a" style="left:24.80px;top:118.70px;width:79.20px;height:10.60px;overflow:hidden">
<div class="t" style="right:1.4px;top:3.00px;font-size:7.115px;color:#1f1f1f">21/02/2020 9:10:35</div>
</div>
<div class="a" style="left:105.00px;top:118.70px;width:79.80px;height:10.60px;overflow:hidden">
<div class="t" style="left:1.4px;top:3.00px;font-size:7.115px;color:#1f1f1f">Somita</div>
</div>
<div class="a" style="left:185.80px;top:118.70px;width:389.20px;height:10.60px;overflow:hidden">
<div class="t" style="left:1.4px;top:3.00px;font-size:7.115px;color:#1f1f1f">La paraula &quot;somita&quot; és femenina al CERCATERM i masculina a la Viquipèdia i en altres textos. Què és millor?</div>
</div>
<div class="a" style="left:576.00px;top:118.70px;width:143.10px;height:10.60px;overflow:hidden">
<div class="t" style="left:1.4px;top:3.00px;font-size:7.115px;color:#1f1f1f">Terminològica</div>
</div>
<div class="a" style="left:720.10px;top:118.70px;width:153.10px;height:10.60px;overflow:hidden">
<div class="t" style="left:1.4px;top:3.00px;font-size:7.115px;color:#1f1f1f">Ciències de la vida i la salut</div>
</div>
<div class="a" style="left:874.20px;top:118.70px;width:79.70px;height:10.60px;overflow:hidden">
<div class="t" style="left:1.4px;top:3.00px;font-size:7.115px;color:#1f1f1f">Personal d&#x27;administració</div>
</div>
<div class="a" style="left:954.90px;top:118.70px;width:32.40px;height:10.60px;overflow:hidden">
<div class="t" style="left:1.4px;top:3.00px;font-size:7.115px;color:#1f1f1f">Declaro que he llegit</div>
</div>
<div class="a" style="left:24.80px;top:146.70px;width:79.20px;height:10.90px;overflow:hidden">
<div class="t" style="right:1.4px;top:4.00px;font-size:7.115px;color:#1f1f1f">02/03/2020 14:17:30</div>
</div>
<div class="a" style="left:105.00px;top:146.70px;width:79.80px;height:10.90px;overflow:hidden">
<div class="t" style="left:1.4px;top:4.00px;font-size:7.115px;color:#1f1f1f">comunicació intermàquina</div>
</div>
<div class="a" style="left:185.80px;top:129.70px;width:389.20px;height:27.90px;overflow:hidden">
<div class="t" style="left:1.4px;top:4.00px;font-size:7.115px;color:#1f1f1f">Comunicació {7}inter-persones{8} i {9}inter-màquines{10}. Busco com resoldre aquests adjectius. Comunicació interpersonal</div>
<div class="t" style="left:1.4px;top:12.00px;font-size:7.115px;color:#1f1f1f">(Del grau de Comunicació i Indústries Culturals, PD Teoria i Història de la Comunicació)</div>
</div>
<div class="a" style="left:576.00px;top:146.70px;width:143.10px;height:10.90px;overflow:hidden">
<div class="t" style="left:1.4px;top:4.00px;font-size:7.115px;color:#1f1f1f">Terminològica</div>
</div>
<div class="a" style="left:720.10px;top:146.70px;width:153.10px;height:10.90px;overflow:hidden">
<div class="t" style="left:1.4px;top:4.00px;font-size:7.115px;color:#1f1f1f">Dret i ciències socials</div>
</div>
<div class="a" style="left:874.20px;top:146.70px;width:79.70px;height:10.90px;overflow:hidden">
<div class="t" style="left:1.4px;top:4.00px;font-size:7.115px;color:#1f1f1f">Personal d&#x27;administració</div>
</div>
<div class="a" style="left:954.90px;top:146.70px;width:32.40px;height:10.90px;overflow:hidden">
<div class="t" style="left:1.4px;top:4.00px;font-size:7.115px;color:#1f1f1f">Declaro que he llegit</div>
</div>
<div class="a" style="left:24.80px;top:175.70px;width:79.20px;height:10.25px;overflow:hidden">
<div class="t" style="right:1.4px;top:3.00px;font-size:7.115px;color:#1f1f1f">04/03/2020 15:45:41</div>
</div>
<div class="a" style="left:105.00px;top:175.70px;width:79.80px;height:10.25px;overflow:hidden">
<div class="t" style="left:1.4px;top:3.00px;font-size:7.115px;color:#1f1f1f">pati</div>
</div>
<div class="a" style="left:185.80px;top:158.70px;width:389.20px;height:27.25px;overflow:hidden">
<div class="t" style="left:1.4px;top:3.00px;font-size:7.115px;color:#1f1f1f">Quina és la preferència pel nom de pati (pati de Lletres, per exemple) en anglès? Hem trobat courtyard, però també patio en</div>
<div class="t" style="left:1.4px;top:20.00px;font-size:7.115px;color:#1f1f1f">Gràcies.</div>
</div>
<div class="a" style="left:576.00px;top:175.70px;width:143.10px;height:10.25px;overflow:hidden">
<div class="t" style="left:1.4px;top:3.00px;font-size:7.115px;color:#1f1f1f">Terminològica, Lingüística</div>
</div>
<div class="a" style="left:874.20px;top:175.70px;width:79.70px;height:10.25px;overflow:hidden">
<div class="t" style="left:1.4px;top:3.00px;font-size:7.115px;color:#1f1f1f">Personal d&#x27;administració</div>
</div>
<div class="a" style="left:954.90px;top:175.70px;width:32.40px;height:10.25px;overflow:hidden">
<div class="t" style="left:1.4px;top:3.00px;font-size:7.115px;color:#1f1f1f">Declaro que he llegit</div>
</div>
<div class="a" style="left:24.80px;top:186.70px;width:79.20px;height:10.50px;overflow:hidden">
<div class="t" style="right:1.4px;top:3.00px;font-size:7.115px;color:#1f1f1f">05/03/2020 13:26:59</div>
</div>
<div class="a" style="left:105.00px;top:186.70px;width:79.80px;height:10.50px;overflow:hidden">
<div class="t" style="left:1.4px;top:3.00px;font-size:7.115px;color:#1f1f1f">relació comunicoafectiva</div>
</div>
<div class="a" style="left:185.80px;top:186.70px;width:389.20px;height:10.50px;overflow:hidden">
<div class="t" style="left:1.4px;top:3.00px;font-size:7.115px;color:#1f1f1f">Una professora em pregunta si ha de corregir aquest terme en un TFG d&#x27;una alumna. Es refereix a la comunicació afectiva</div>
</div>
<div class="a" style="left:576.00px;top:186.70px;width:143.10px;height:10.50px;overflow:hidden">
<div class="t" style="left:1.4px;top:3.00px;font-size:7.115px;color:#1f1f1f">Terminològica</div>
</div>
<div class="a" style="left:874.20px;top:186.70px;width:79.70px;height:10.50px;overflow:hidden">
<div class="t" style="left:1.4px;top:3.00px;font-size:7.115px;color:#1f1f1f">Personal d&#x27;administració</div>
</div>
<div class="a" style="left:954.90px;top:186.70px;width:32.40px;height:10.50px;overflow:hidden">
<div class="t" style="left:1.4px;top:3.00px;font-size:7.115px;color:#1f1f1f">Declaro que he llegit</div>
</div>
<div class="a" style="left:24.80px;top:214.70px;width:79.20px;height:10.70px;overflow:hidden">
<div class="t" style="right:1.4px;top:4.00px;font-size:7.115px;color:#1f1f1f">10/03/2020 11:38:56</div>
</div>
<div class="a" style="left:105.00px;top:214.70px;width:79.80px;height:10.70px;overflow:hidden">
<div class="t" style="left:1.4px;top:4.00px;font-size:7.115px;color:#1f1f1f">Ateneu UB</div>
</div>
<div class="a" style="left:185.80px;top:197.70px;width:389.20px;height:27.70px;overflow:hidden">
<div class="t" style="left:1.4px;top:4.00px;font-size:7.115px;color:#1f1f1f">https://www.ub.edu/web/ub/ca/menu_eines/agenda/2020/03/17_1.html</div>
<div class="t" style="left:1.4px;top:21.00px;font-size:7.115px;color:#1f1f1f">En els textos en castellà, hauria de traduir-se, com en el cas del nom d&#x27;un vicerrectorat o d&#x27;una unitat acadèmica o administrativa</div>
</div>
<div class="a" style="left:576.00px;top:214.70px;width:143.10px;height:10.70px;overflow:hidden">
<div class="t" style="left:1.4px;top:4.00px;font-size:7.115px;color:#1f1f1f">Lingüística</div>
</div>
<div class="a" style="left:720.10px;top:214.70px;width:153.10px;height:10.70px;overflow:hidden">
<div class="t" style="left:1.4px;top:4.00px;font-size:7.115px;color:#1f1f1f">Altres</div>
</div>
<div class="a" style="left:874.20px;top:214.70px;width:79.70px;height:10.70px;overflow:hidden">
<div class="t" style="left:1.4px;top:4.00px;font-size:7.115px;color:#1f1f1f">Personal d&#x27;administració</div>
</div>
<div class="a" style="left:954.90px;top:214.70px;width:32.40px;height:10.70px;overflow:hidden">
<div class="t" style="left:1.4px;top:4.00px;font-size:7.115px;color:#1f1f1f">Declaro que he llegit</div>
</div>
<div class="a" style="left:24.80px;top:225.70px;width:79.20px;height:10.80px;overflow:hidden">
<div class="t" style="right:1.4px;top:4.00px;font-size:7.115px;color:#1f1f1f">11/03/2020 11:55:52</div>
</div>
<div class="a" style="left:105.00px;top:225.70px;width:79.80px;height:10.80px;overflow:hidden">
<div class="t" style="left:1.4px;top:4.00px;font-size:7.115px;color:#1f1f1f">back end /front end</div>
</div>
<div class="a" style="left:185.80px;top:225.70px;width:389.20px;height:10.80px;overflow:hidden">
<div class="t" style="left:1.4px;top:4.00px;font-size:7.115px;color:#1f1f1f">forma en català</div>
</div>
<div class="a" style="left:576.00px;top:225.70px;width:143.10px;height:10.80px;overflow:hidden">
<div class="t" style="left:1.4px;top:4.00px;font-size:7.115px;color:#1f1f1f">Terminològica</div>
</div>
<div class="a" style="left:720.10px;top:225.70px;width:153.10px;height:10.80px;overflow:hidden">
<div class="t" style="left:1.4px;top:4.00px;font-size:7.115px;color:#1f1f1f">Altres</div>
</div>
<div class="a" style="left:874.20px;top:225.70px;width:79.70px;height:10.80px;overflow:hidden">
<div class="t" style="left:1.4px;top:4.00px;font-size:7.115px;color:#1f1f1f">Personal d&#x27;administració</div>
</div>
<div class="a" style="left:954.90px;top:225.70px;width:32.40px;height:10.80px;overflow:hidden">
<div class="t" style="left:1.4px;top:4.00px;font-size:7.115px;color:#1f1f1f">Declaro que he llegit</div>
</div>
<div class="a" style="left:24.80px;top:254.70px;width:79.20px;height:10.50px;overflow:hidden">
<div class="t" style="right:1.4px;top:3.00px;font-size:7.115px;color:#1f1f1f">11/03/2020 12:02:25</div>
</div>
<div class="a" style="left:105.00px;top:254.70px;width:79.80px;height:10.50px;overflow:hidden">
<div class="t" style="left:1.4px;top:3.00px;font-size:7.115px;color:#1f1f1f">Responsive Web Design</div>
</div>
<div class="a" style="left:185.80px;top:237.70px;width:389.20px;height:27.50px;overflow:hidden">
<div class="t" style="left:1.4px;top:3.00px;font-size:7.115px;color:#1f1f1f">forma en català</div>
<div class="t" style="left:1.4px;top:20.00px;font-size:7.115px;color:#1f1f1f">PD DISSENY I EDICIÓ DE PRODUCTES MULTIMÈDIA</div>
</div>
<div class="a" style="left:576.00px;top:254.70px;width:143.10px;height:10.50px;overflow:hidden">
<div class="t" style="left:1.4px;top:3.00px;font-size:7.115px;color:#1f1f1f">Terminològica</div>
</div>
<div class="a" style="left:720.10px;top:254.70px;width:153.10px;height:10.50px;overflow:hidden">
<div class="t" style="left:1.4px;top:3.00px;font-size:7.115px;color:#1f1f1f">Altres</div>
</div>
<div class="a" style="left:874.20px;top:254.70px;width:79.70px;height:10.50px;overflow:hidden">
<div class="t" style="left:1.4px;top:3.00px;font-size:7.115px;color:#1f1f1f">Personal d&#x27;administració</div>
</div>
<div class="a" style="left:954.90px;top:254.70px;width:32.40px;height:10.50px;overflow:hidden">
<div class="t" style="left:1.4px;top:3.00px;font-size:7.115px;color:#1f1f1f">Declaro que he llegit</div>
</div>
<div class="a" style="left:24.80px;top:282.70px;width:79.20px;height:10.80px;overflow:hidden">
<div class="t" style="right:1.4px;top:4.00px;font-size:7.115px;color:#1f1f1f">11/03/2020 12:19:53</div>
</div>
<div class="a" style="left:105.00px;top:282.70px;width:79.80px;height:10.80px;overflow:hidden">
<div class="t" style="left:1.4px;top:4.00px;font-size:7.115px;color:#1f1f1f">wireframe</div>
</div>
<div class="a" style="left:185.80px;top:265.70px;width:389.20px;height:27.80px;overflow:hidden">
<div class="t" style="left:1.4px;top:4.00px;font-size:7.115px;color:#1f1f1f">forma en català</div>
<div class="t" style="left:1.4px;top:12.00px;font-size:7.115px;color:#1f1f1f">363950 DISSENY I EDICIÓ DE PRODUCTES MULTIMÈDIA</div>
<div class="t" style="left:1.4px;top:21.00px;font-size:7.115px;color:#1f1f1f">parla de &quot;disseny de wireframes&quot;. Al Cercaterm trobo dues formes que no veig clar que siguin d&#x27;aquest àmbit</div>
</div>
<div class="a" style="left:576.00px;top:282.70px;width:143.10px;height:10.80px;overflow:hidden">
<div class="t" style="left:1.4px;top:4.00px;font-size:7.115px;color:#1f1f1f">Terminològica</div>
</div>
<div class="a" style="left:720.10px;top:282.70px;width:153.10px;height:10.80px;overflow:hidden">
<div class="t" style="left:1.4px;top:4.00px;font-size:7.115px;color:#1f1f1f">Altres</div>
</div>
<div class="a" style="left:874.20px;top:282.70px;width:79.70px;height:10.80px;overflow:hidden">
<div class="t" style="left:1.4px;top:4.00px;font-size:7.115px;color:#1f1f1f">Personal d&#x27;administració</div>
</div>
<div class="a" style="left:954.90px;top:282.70px;width:32.40px;height:10.80px;overflow:hidden">
<div class="t" style="left:1.4px;top:4.00px;font-size:7.115px;color:#1f1f1f">Declaro que he llegit</div>
</div>
<div class="a" style="left:24.80px;top:327.70px;width:79.20px;height:10.60px;overflow:hidden">
<div class="t" style="right:1.4px;top:3.00px;font-size:7.115px;color:#1f1f1f">11/03/2020 12:33:47</div>
</div>
<div class="a" style="left:105.00px;top:327.70px;width:79.80px;height:10.60px;overflow:hidden">
<div class="t" style="left:1.4px;top:3.00px;font-size:7.115px;color:#1f1f1f">rating, liking, sharing</div>
</div>
<div class="a" style="left:185.80px;top:293.70px;width:389.20px;height:44.60px;overflow:hidden">
<div class="t" style="left:1.4px;top:4.00px;font-size:7.115px;color:#1f1f1f">he trobat ràting. Liking i  sharing, no.</div>
<div class="t" style="left:1.4px;top:21.00px;font-size:7.115px;color:#1f1f1f">PD 363950 DISSENY I EDICIÓ DE PRODUCTES MULTIMÈDIA</div>
<div class="t" style="left:1.4px;top:29.00px;font-size:7.115px;color:#1f1f1f">El fragment diu: &quot;interacció, comentaris, rating, liking, sharing...</div>
</div>
<div class="a" style="left:576.00px;top:327.70px;width:143.10px;height:10.60px;overflow:hidden">
<div class="t" style="left:1.4px;top:3.00px;font-size:7.115px;color:#1f1f1f">Terminològica</div>
</div>
<div class="a" style="left:720.10px;top:327.70px;width:153.10px;height:10.60px;overflow:hidden">
<div class="t" style="left:1.4px;top:3.00px;font-size:7.115px;color:#1f1f1f">Altres</div>
</div>
<div class="a" style="left:874.20px;top:327.70px;width:79.70px;height:10.60px;overflow:hidden">
<div class="t" style="left:1.4px;top:3.00px;font-size:7.115px;color:#1f1f1f">Personal d&#x27;administració</div>
</div>
<div class="a" style="left:954.90px;top:327.70px;width:32.40px;height:10.60px;overflow:hidden">
<div class="t" style="left:1.4px;top:3.00px;font-size:7.115px;color:#1f1f1f">Declaro que he llegit</div>
</div>
<div class="a" style="left:24.80px;top:381.70px;width:79.20px;height:10.20px;overflow:hidden">
<div class="t" style="right:1.4px;top:3.00px;font-size:7.115px;color:#1f1f1f">11/03/2020 12:41:18</div>
</div>
<div class="a" style="left:105.00px;top:381.70px;width:79.80px;height:10.20px;overflow:hidden">
<div class="t" style="left:1.4px;top:3.00px;font-size:7.115px;color:#1f1f1f">scanning i skimming</div>
</div>
<div class="a" style="left:185.80px;top:338.70px;width:389.20px;height:53.20px;overflow:hidden">
<div class="t" style="left:1.4px;top:4.00px;font-size:7.115px;color:#1f1f1f">forma normalitzada?</div>
<div class="t" style="left:1.4px;top:12.00px;font-size:7.115px;color:#1f1f1f">Del PD 363950 DISSENY I EDICIÓ DE PRODUCTES MULTIMÈDIA</div>
<div class="t" style="left:1.4px;top:21.00px;font-size:7.115px;color:#1f1f1f">Les documento en una obra de D. Cassany. Són diferents estratègies de lectura</div>
<div class="t" style="left:1.4px;top:38.00px;font-size:7.115px;color:#1f1f1f">https://books.google.es/books?id=5gpdDwAAQBAJ&amp;pg=PT50&amp;lpg=PT50&amp;dq=scanning+i+skimming&amp;source=bl&amp;ots=zqb3sQ</div>
</div>
<div class="a" style="left:576.00px;top:381.70px;width:143.10px;height:10.20px;overflow:hidden">
<div class="t" style="left:1.4px;top:3.00px;font-size:7.115px;color:#1f1f1f">Terminològica</div>
</div>
<div class="a" style="left:720.10px;top:381.70px;width:153.10px;height:10.20px;overflow:hidden">
<div class="t" style="left:1.4px;top:3.00px;font-size:7.115px;color:#1f1f1f">Altres</div>
</div>
<div class="a" style="left:874.20px;top:381.70px;width:79.70px;height:10.20px;overflow:hidden">
<div class="t" style="left:1.4px;top:3.00px;font-size:7.115px;color:#1f1f1f">Personal d&#x27;administració</div>
</div>
<div class="a" style="left:954.90px;top:381.70px;width:32.40px;height:10.20px;overflow:hidden">
<div class="t" style="left:1.4px;top:3.00px;font-size:7.115px;color:#1f1f1f">Declaro que he llegit</div>
</div>
<div class="a" style="left:719.10px;top:45.70px;width:155.10px;height:20.40px;background:transparent;border:1.1px solid #1a73e8"></div>
<div class="a" style="left:871.50px;top:63.80px;width:4.4px;height:4.4px;border-radius:50%;background:#1a73e8"></div>
</div>
<div class="a" style="left:988.00px;top:132.30px;width:6.20px;height:392.30px;background:#fff;"></div>
<div class="a" style="left:987.60px;top:132.30px;width:0.80px;height:392.30px;background:#e8e8e8;"></div>
<div class="a" style="left:988.00px;top:156.00px;width:6.20px;height:2.90px;background:#dde1e8;"></div>
<div class="a" style="left:988.00px;top:132.30px;width:6.20px;height:0.90px;background:#d6d8db;"></div>
<div class="a" style="left:989.00px;top:180.00px;width:4.40px;height:74.00px;background:#dadce0;border-radius:2.2px"></div>
<div class="a" style="left:988.00px;top:500.70px;width:6.20px;height:0.80px;background:#ececec;"></div>
<div class="a" style="left:988.00px;top:508.90px;width:6.20px;height:0.80px;background:#ececec;"></div>
<svg class="a" style="left:989.60px;top:503.90px;" width="3.6" height="2.4" viewBox="0 0 3.6 2.4"><path d="M0 2.4L1.8 0L3.6 2.4Z" fill="#8a8d91"/></svg>
<svg class="a" style="left:989.60px;top:512.40px;" width="3.6" height="2.4" viewBox="0 0 3.6 2.4"><path d="M0 0L1.8 2.4L3.6 0Z" fill="#8a8d91"/></svg>
<div class="a" style="left:0.00px;top:517.50px;width:988.00px;height:7.10px;background:#fff;"></div>
<div class="a" style="left:0.00px;top:517.50px;width:988.00px;height:0.80px;background:#ececec;"></div>
<div class="a" style="left:0.00px;top:518.30px;width:24.30px;height:6.30px;background:#f8f9fa;"></div>
<div class="a" style="left:25.30px;top:518.75px;width:608.45px;height:4.65px;background:#dadce0;border-radius:2.3px"></div>
<div class="a" style="left:970.30px;top:518.30px;width:0.70px;height:6.30px;background:#ececec;"></div>
<div class="a" style="left:978.90px;top:518.30px;width:0.70px;height:6.30px;background:#ececec;"></div>
<svg class="a" style="left:973.60px;top:519.60px;" width="2.4" height="3.6" viewBox="0 0 2.4 3.6"><path d="M2.4 0L0 1.8L2.4 3.6Z" fill="#8a8d91"/></svg>
<svg class="a" style="left:982.40px;top:519.60px;" width="2.4" height="3.6" viewBox="0 0 2.4 3.6"><path d="M0 0L2.4 1.8L0 3.6Z" fill="#8a8d91"/></svg>
<div class="a" style="left:0.00px;top:524.20px;width:994.20px;height:0.80px;background:#e1e3e6;"></div>
<svg class="a" style="left:30.00px;top:532.20px;" width="5.8" height="5.8" viewBox="0 0 5.8 5.8"><path d="M2.9 0V5.8M0 2.9H5.8" stroke="#444746" stroke-width="1"/></svg>
<svg class="a" style="left:50.50px;top:532.30px;" width="8" height="5.5" viewBox="0 0 8 5.5"><path d="M0 0.5H8M0 2.75H8M0 5H8" stroke="#444746" stroke-width="1"/></svg>
<div class="a" style="left:71.30px;top:525.30px;width:126.30px;height:18.70px;background:#e1e9f7;"></div>
<svg class="a" style="left:77.00px;top:530.50px;" width="10" height="10" viewBox="0 0 10 10"><rect x="0" y="0" width="10" height="10" rx="1.3" fill="#7e3ff2"/><path d="M2.4 2.9H7.6M2.4 5H7.6M2.4 7.1H7.6" stroke="#fff" stroke-width="1"/></svg>
<div class="t" style="left:89.80px;top:532.00px;font-size:7.9px;color:#0b57d0;font-weight:700;">Respostes al formulari 1</div>
<svg class="a" style="left:187.30px;top:534.20px;" width="4" height="2.2" viewBox="0 0 4 2.2"><path d="M0 0H4L2 2.2Z" fill="#0b57d0"/></svg>
<div class="a" style="left:939.10px;top:525.00px;width:55.10px;height:19.00px;background:#fdfdfd;"></div>
<div class="a" style="left:938.50px;top:525.00px;width:0.60px;height:19.00px;background:#d8dadd;"></div>
<svg class="a" style="left:946.00px;top:531.00px;" width="8" height="8.4" viewBox="0 0 8 8.4"><path d="M0.8 0H7.2Q8 0 8 0.8V6.4Q8 7.2 7.2 7.2H5.2L4 8.4L2.8 7.2H0.8Q0 7.2 0 6.4V0.8Q0 0 0.8 0Z" fill="#1e9a4f"/><path d="M4 1.6L4.7 2.9L6 3.6L4.7 4.3L4 5.6L3.3 4.3L2 3.6L3.3 2.9Z" fill="#fff"/></svg>
<div class="t" style="left:961.70px;top:533.00px;font-size:6.34px;color:#279a52;font-weight:400;text-shadow:0.2px 0 0 #279a52">Explora</div>
<svg class="a" style="left:1006.80px;top:527.00px;" width="4.2" height="5.5" viewBox="0 0 4.2 5.5"><path d="M0.7 0.5L3.4 2.75L0.7 5" stroke="#444746" stroke-width="1.3" fill="none"/></svg>
</body></html>
